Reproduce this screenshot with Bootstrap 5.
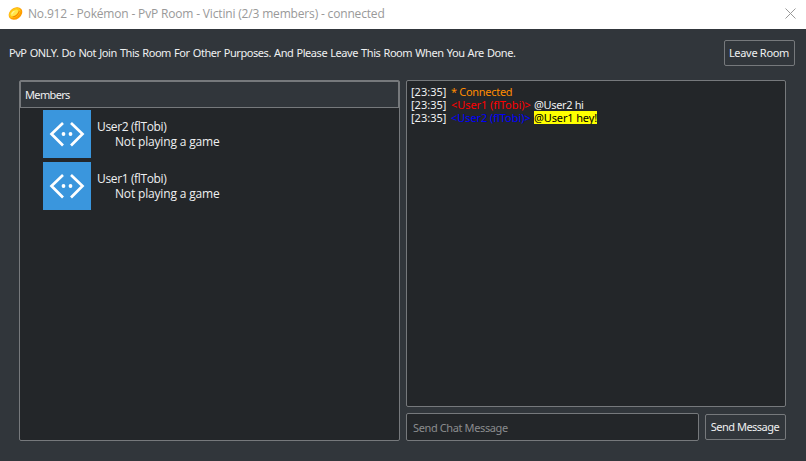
<!DOCTYPE html>
<html lang="en">
<head>
<meta charset="utf-8">
<title>PvP Room - Victini</title>
<link href="https://cdn.jsdelivr.net/npm/bootstrap@5.3.0/dist/css/bootstrap.min.css" rel="stylesheet">
<style>
html,body{height:100%}
body{background:#31363b;color:#eff0f1;font-family:"Noto Sans","Open Sans",sans-serif;font-size:11px;line-height:13px;overflow:hidden}
.titlebar{height:29px;background:#fff;color:#999;font-family:"Open Sans","Noto Sans",sans-serif;font-size:12px;padding:0 10px 2px 8px}
.title-text{margin-left:5px;letter-spacing:-.17px}
.notice{height:51px;padding:0 11px 3px 9px}
.notice-text{letter-spacing:-.44px;word-spacing:.7px;padding-bottom:2px}
.room-btn{--bs-btn-color:#eff0f1;--bs-btn-border-color:#76797c;--bs-btn-border-radius:2px;--bs-btn-hover-bg:#3b4045;--bs-btn-hover-color:#fff;--bs-btn-hover-border-color:#76797c;--bs-btn-padding-x:0;--bs-btn-padding-y:0;--bs-btn-font-size:11px;--bs-btn-line-height:13px;height:26px;white-space:nowrap;padding:0 1px 2px 0}
.leave-btn{width:71px;letter-spacing:-.3px}
.send-btn{width:81px;margin-top:1px;letter-spacing:-.5px}
.room{height:361px;padding:0 20px 0 19px;gap:6px}
.panel{background:#232629;border:1px solid #76797c;border-radius:2px}
.members{width:381px}
.members-head{height:27px;background:#31363b;border:1px solid #76797c;padding-left:4px;padding-bottom:1px;letter-spacing:-.65px}
.member-list{padding:2px 0 0 23px;gap:4px;font-family:"Open Sans","Noto Sans",sans-serif;font-size:12px;line-height:15px}
.member{gap:6px}
.avatar{width:48px;height:48px;background:#3a96dd}
.member-name{letter-spacing:-.36px}
.status{padding-left:18px;letter-spacing:-.17px}
.chat-side{gap:6px}
.log{padding:4px}
.log-line{height:13px;white-space:nowrap}
.log-line span{display:inline-block;height:13px;line-height:13px;vertical-align:top}
.stamp{width:40px}
.c-sys{color:#ff8c00;letter-spacing:-.3px}.c-one{color:#f00}.c-two{color:#00f}
.c-one,.c-two{width:83px;letter-spacing:-.06px}
.says{letter-spacing:-.35px}
.ping{background:#ff0;color:#000;letter-spacing:-.13px;overflow:hidden}
.chat-input,.chat-input:focus{height:28px;background:#232629;border:1px solid #76797c;border-radius:2px;color:#eff0f1;font-size:11px;line-height:13px;padding:0 6px;box-shadow:none;letter-spacing:-.38px}
.chat-input::placeholder{color:#8a8c8e;opacity:1}
</style>
<script src="https://cdn.jsdelivr.net/npm/bootstrap@5.3.0/dist/js/bootstrap.bundle.min.js"></script>
</head>
<body>
<header class="titlebar d-flex align-items-center">
<svg width="15" height="15" viewBox="0 0 15 15"><g transform="rotate(-38 7.5 7.5)"><ellipse cx="7.5" cy="7.5" rx="7.4" ry="5.6" fill="#ff9d00"/><ellipse cx="7.3" cy="6.5" rx="6.5" ry="4.2" fill="#ffc814"/><ellipse cx="7" cy="6.3" rx="4.4" ry="2.3" fill="#ffe64d"/><path d="M3 8.500Q7 11 12 8" stroke="#f58200" stroke-width="1" fill="none"/><path d="M4 5.800Q6 4.600 8 5" stroke="#fff6a0" fill="none"/></g></svg>
<span class="title-text">No.912 - Pokémon - PvP Room - Victini (2/3 members) - connected</span>
<svg class="ms-auto" width="11" height="11" viewBox="0 0 11 11"><path d="M.5.5l10 10M10.5.5l-10 10" stroke="#999" fill="none"/></svg>
</header>
<div class="notice d-flex align-items-center justify-content-between">
<span class="notice-text">PvP ONLY. Do Not Join This Room For Other Purposes. And Please Leave This Room When You Are Done.</span>
<button class="btn room-btn leave-btn">Leave Room</button>
</div>
<main class="room d-flex">
<section class="panel members flex-shrink-0">
<div class="members-head d-flex align-items-center">Members</div>
<div class="member-list d-flex flex-column">
<div class="member d-flex align-items-center">
<svg class="avatar" viewBox="0 0 48 48"><path d="M20 13L8.500 24L20 35.500M28 13L39.500 24L28 35.500" fill="none" stroke="#fff" stroke-width="2.700"/><circle cx="20.500" cy="24" r="1.900" fill="#fff"/><circle cx="27.500" cy="24" r="1.900" fill="#fff"/></svg>
<div><div class="member-name">User2 (flTobi)</div><div class="status">Not playing a game</div></div>
</div>
<div class="member d-flex align-items-center">
<svg class="avatar" viewBox="0 0 48 48"><path d="M20 13L8.500 24L20 35.500M28 13L39.500 24L28 35.500" fill="none" stroke="#fff" stroke-width="2.700"/><circle cx="20.500" cy="24" r="1.900" fill="#fff"/><circle cx="27.500" cy="24" r="1.900" fill="#fff"/></svg>
<div><div class="member-name">User1 (flTobi)</div><div class="status">Not playing a game</div></div>
</div>
</div>
</section>
<section class="chat-side d-flex flex-column flex-grow-1">
<div class="panel log flex-grow-1">
<div class="log-line d-flex"><span class="stamp">[23:35]</span><span class="c-sys">* Connected</span></div>
<div class="log-line d-flex"><span class="stamp">[23:35]</span><span class="c-one">&lt;User1 (flTobi)&gt;</span><span class="says">@User2 hi</span></div>
<div class="log-line d-flex"><span class="stamp">[23:35]</span><span class="c-two">&lt;User2 (flTobi)&gt;</span><span class="ping">@User1 hey!</span></div>
</div>
<div class="d-flex align-items-start chat-side">
<input class="form-control chat-input" placeholder="Send Chat Message" aria-label="Chat message">
<button class="btn room-btn send-btn flex-shrink-0">Send Message</button>
</div>
</section>
</main>
</body>
</html>
